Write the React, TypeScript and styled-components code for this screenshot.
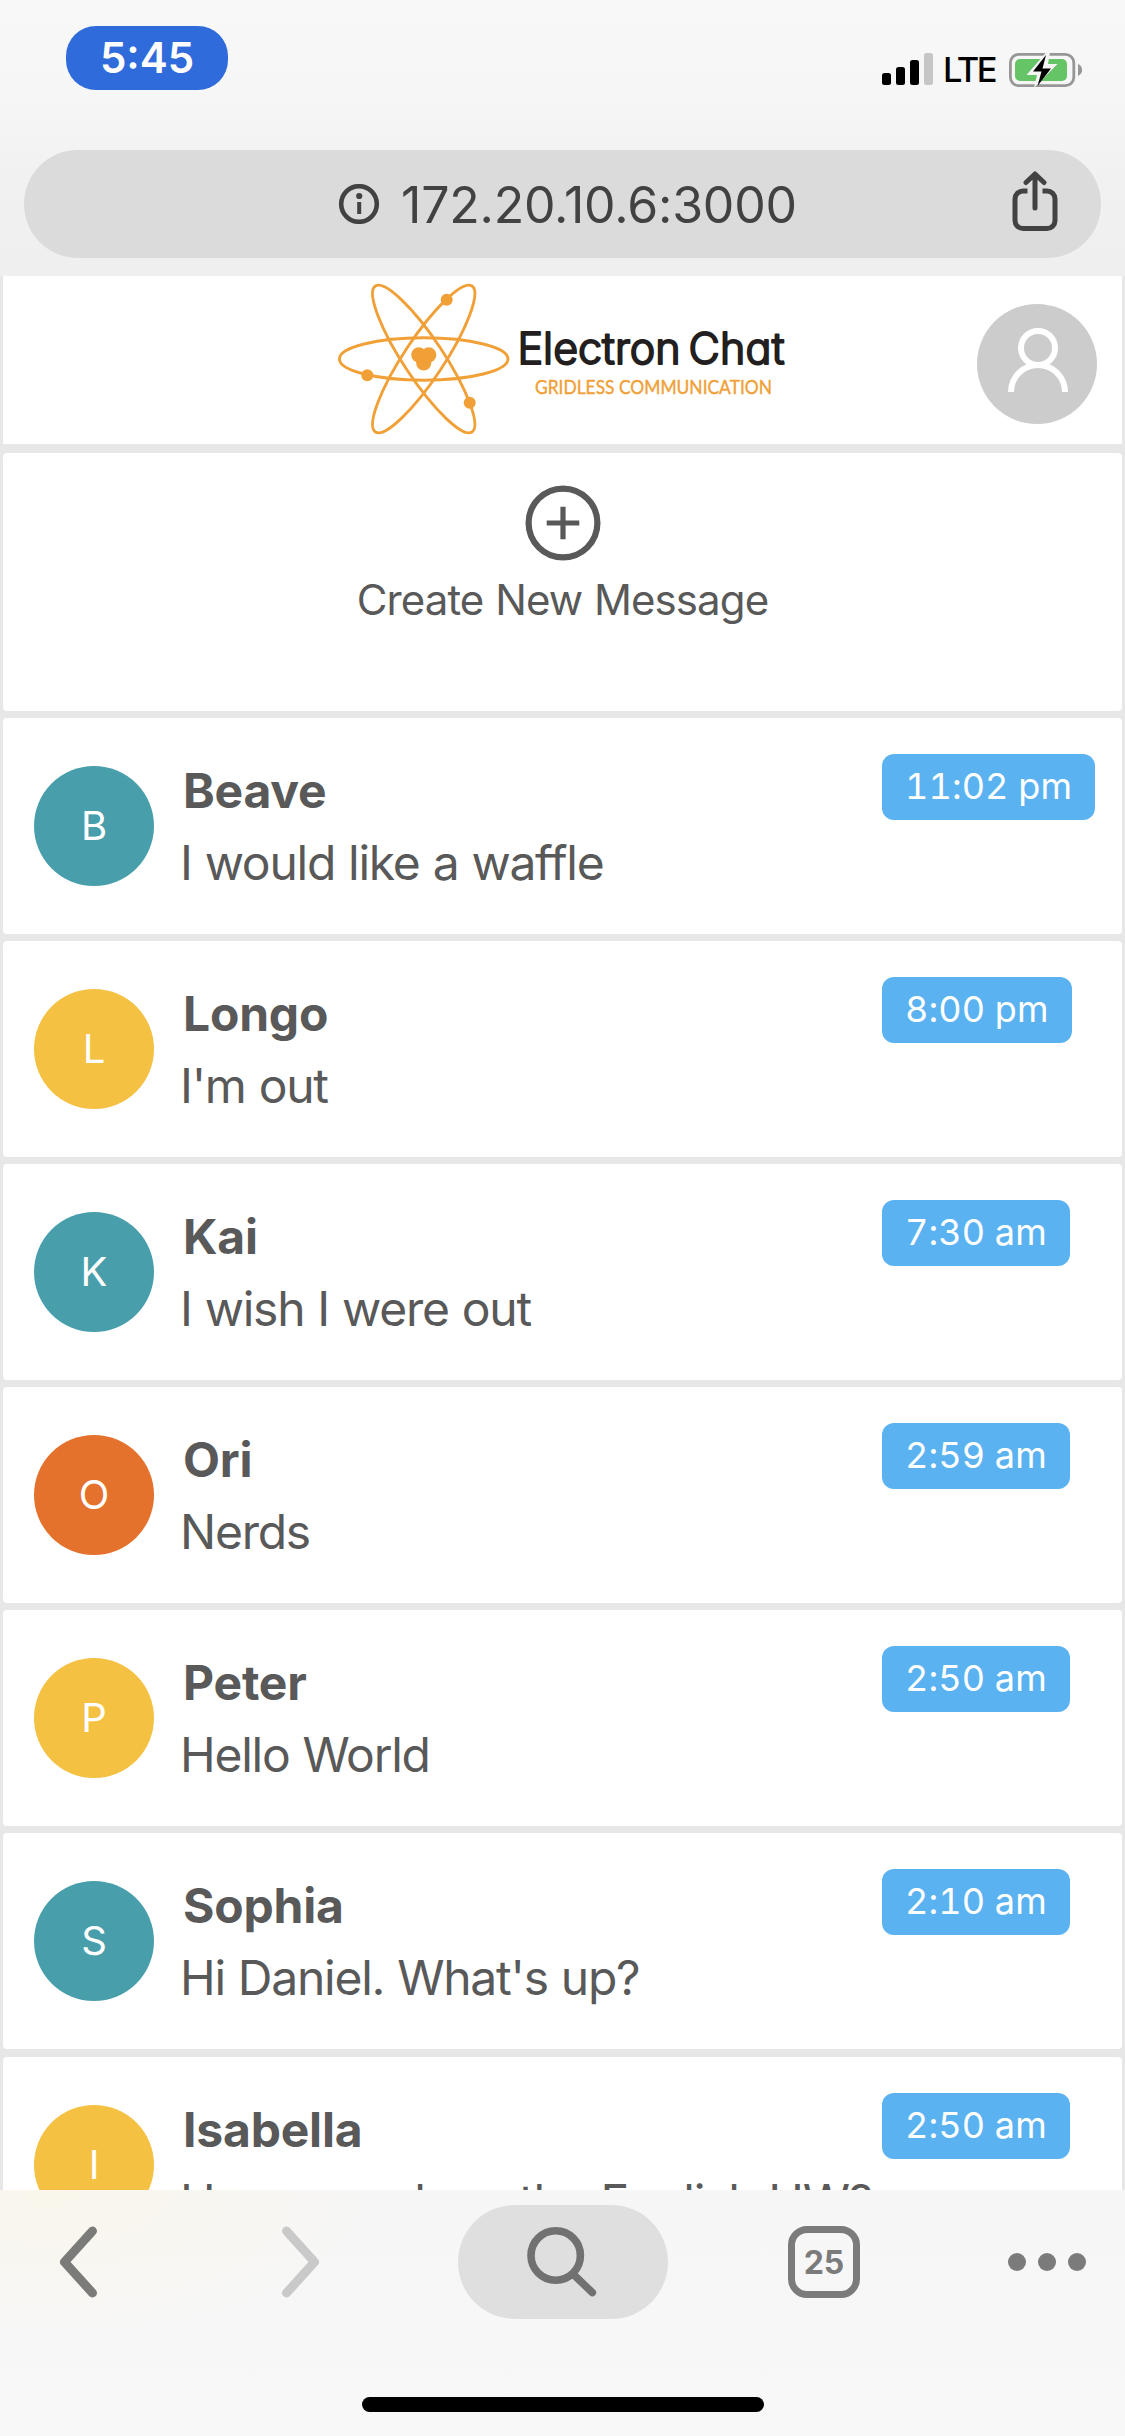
import React from "react";
import styled, { createGlobalStyle } from "styled-components";

const GlobalStyle = createGlobalStyle`
  * { box-sizing: border-box; }
  body { margin: 0; background: #e7e7e7; }
`;

const ink = "#595959";

const Screen = styled.div`
  display: flex;
  flex-direction: column;
  width: 1125px;
  height: 2436px;
  overflow: hidden;
  font-family: Inter, "Liberation Sans", sans-serif;
  color: ${ink};
`;

const TopChrome = styled.header`
  flex: none;
  height: 276px;
  padding: 26px 24px 0;
  background: linear-gradient(#f8f8f8 0%, #f6f6f6 35%, #f1f1f1 65%, #efefef 100%);
`;

const StatusBar = styled.div`
  display: flex;
  justify-content: space-between;
  height: 124px;
  padding: 0 19px 0 42px;
`;

const TimePill = styled.div`
  width: 162px;
  height: 64px;
  border-radius: 30px;
  background: #2f6bdb;
  color: #fff;
  font-size: 42px;
  font-weight: 600;
  line-height: 64px;
  text-align: center;
`;

const StatusIcons = styled.div`
  display: flex;
  align-items: flex-start;
  padding-top: 26px;
`;

const Network = styled.span`
  margin: 0 12px 0 10px;
  width: 53px;
  color: #000;
  font-size: 34.5px;
  font-weight: 500;
  line-height: 36px;
  letter-spacing: -2.5px;
`;

const AddressBar = styled.div`
  display: flex;
  align-items: center;
  height: 108px;
  padding: 0 43px 0 313px;
  border-radius: 54px;
  background: #dbdbdb;
  color: #424242;
`;

const Address = styled.span`
  flex: 1;
  margin-left: 20px;
  padding-top: 2px;
  font-size: 50px;
  line-height: 60px;
  letter-spacing: -0.2px;
`;

const Page = styled.main`
  flex: none;
  height: 1914px;
  overflow: hidden;
  padding: 0 3px;
  background: #e7e7e7;
`;

const AppHeader = styled.div`
  display: flex;
  align-items: center;
  justify-content: space-between;
  height: 168px;
  padding: 0 25px 0 332px;
  background: #fff;
`;

const LogoSvg = styled.svg`
  display: block;
  width: 456px;
  height: 160px;
`;

const BrandName = styled.text`
  fill: #231f20;
  stroke: #231f20;
  stroke-width: 2px;
  stroke-linejoin: round;
  stroke-linecap: round;
  font-family: Inter, sans-serif;
  font-size: 43px;
  font-weight: 300;
  font-feature-settings: "cv11", "ss03";
`;

const Tagline = styled.text`
  fill: #f0a037;
  stroke: #f0a037;
  stroke-width: 0.4px;
  stroke-linejoin: round;
  font-family: Lato, sans-serif;
  font-size: 19px;
`;

const ProfileButton = styled.div`
  width: 120px;
  height: 120px;
  margin-top: 8px;
  border-radius: 50%;
  background: #ccc;
`;

const Card = styled.section`
  border-radius: 4px;
  background: #fff;
`;

const CreateCard = styled(Card)`
  display: flex;
  flex-direction: column;
  align-items: center;
  height: 258px;
  margin-top: 9px;
  padding-top: 32px;
`;

const CreateLabel = styled.span`
  margin-top: 9px;
  font-size: 42px;
  line-height: 60px;
  letter-spacing: -0.9px;
  word-spacing: 0.8px;
  white-space: nowrap;
`;

const ChatRow = styled(Card)<{ $gap: number }>`
  display: grid;
  grid-template-columns: 120px minmax(0, 1fr) 240px;
  height: 216px;
  margin-top: ${(p) => p.$gap}px;
  padding-left: 31px;
`;

const Initial = styled.div<{ $color: string }>`
  width: 120px;
  height: 120px;
  margin-top: 48px;
  border-radius: 50%;
  background: ${(p) => p.$color};
  color: #fff;
  font-size: 40px;
  font-weight: 400;
  line-height: 120px;
  text-align: center;
`;

const ChatText = styled.div`
  padding: 37px 0 0 26px;
  font-size: 48px;
  line-height: 72px;
  white-space: nowrap;
`;

const Name = styled.div`
  padding-left: 3px;
  font-weight: 700;
  letter-spacing: -0.2px;
`;

const Message = styled.div`
  letter-spacing: -1.25px;
  word-spacing: 0.8px;
`;

const TimeBadge = styled.time`
  justify-self: start;
  height: 66px;
  margin-top: 36px;
  padding: 0 23px;
  border-radius: 12px;
  background: #5bb2f0;
  color: #fff;
  font-size: 36px;
  font-weight: 400;
  font-variant-numeric: tabular-nums;
  line-height: 64px;
  letter-spacing: 0.1px;
  white-space: nowrap;
`;

const BottomChrome = styled.footer`
  display: flex;
  flex: none;
  flex-direction: column;
  align-items: center;
  height: 246px;
  background:
    radial-gradient(ellipse 330px 150px at 50px 0, #faf6ec 0%, rgba(247, 247, 247, 0) 100%),
    linear-gradient(#f6f6f6, #f8f8f8);
`;

const Toolbar = styled.nav`
  display: grid;
  grid-template-columns: 60px 222px 176px 210px 120px 220px 1fr;
  align-items: center;
  width: 1125px;
  height: 114px;
  margin-top: 15px;
  color: #7b7b7b;
`;

const SearchPill = styled.div`
  display: flex;
  align-items: center;
  height: 114px;
  padding-left: 68px;
  border-radius: 57px;
  background: #dfdfdf;
`;

const TabCount = styled.div`
  display: flex;
  align-items: center;
  justify-content: center;
  width: 72px;
  height: 72px;
  border: 7.5px solid #7b7b7b;
  border-radius: 19px;
  font-size: 32px;
  font-weight: 700;
`;

const HomeIndicator = styled.div`
  width: 402px;
  height: 15px;
  margin-top: 78px;
  border-radius: 8px;
  background: #000;
`;

const SignalIcon = () => (
  <svg width="51" height="34" viewBox="882 52 51 34">
    <rect x="882" y="73" width="9" height="12" rx="2.5" />
    <rect x="896" y="67" width="9" height="18" rx="2.5" />
    <rect x="910" y="60" width="9" height="25" rx="2.5" />
    <rect x="924" y="53" width="9" height="32" rx="2.5" fill="#c6c6c6" />
  </svg>
);

const BatteryIcon = () => (
  <svg width="74" height="36" viewBox="1008 51 74 36">
    <rect x="1010.4" y="53.3" width="63.4" height="31.4" rx="8.5" fill="none" stroke="#979797" strokeWidth="2.8" />
    <path d="M1078 63c2.7 1.2 4.2 3.4 4.2 6s-1.5 4.8-4.2 6z" fill="#979797" />
    <rect x="1015" y="58" width="52" height="22" rx="5" fill="#64c466" />
    <path d="M1046.500 51 1026.500 74h10.500L1034 87 1057.500 63h-9.500L1050 51z" fill="#f5f5f5" />
    <path d="M1046 54 1033 70.500h8.500L1037.500 85 1051 67.500h-8.500z" fill="#000" />
  </svg>
);

const InfoIcon = () => (
  <svg width="44" height="40" viewBox="-2 0 44 40">
    <circle cx="20" cy="20" r="17.8" fill="none" stroke="currentColor" strokeWidth="4.600" />
    <circle cx="20.2" cy="12" r="3.1" fill="currentColor" />
    <path d="M20.200 18v12" stroke="currentColor" strokeWidth="4" />
  </svg>
);

const ShareGlyph = styled.svg`
  margin-bottom: 7px;
`;

const ShareIcon = () => (
  <ShareGlyph width="46" height="60" viewBox="1012.5 170.5 46 60" fill="none" stroke="currentColor" strokeWidth="5">
    <path d="M1028 190.500h-4.500a8 8 0 0 0-8 8v21.500a8 8 0 0 0 8 8h24a8 8 0 0 0 8-8v-21.500a8 8 0 0 0-8-8H1043" />
    <path d="M1035.500 207.500V174M1026.500 182l9-8.500 9 8.500" strokeLinecap="round" strokeLinejoin="round" />
  </ShareGlyph>
);

const Logo = () => (
  <LogoSvg viewBox="335 280 456 160">
    <g fill="none" stroke="#f0a037" strokeWidth="2.9">
      <ellipse cx="423.7" cy="359" rx="84.3" ry="21.2" />
      <ellipse cx="423.7" cy="359" rx="87.5" ry="20" transform="rotate(56.5 423.7 359)" />
      <ellipse cx="423.7" cy="359" rx="87.5" ry="20" transform="rotate(-56.5 423.7 359)" />
    </g>
    <g fill="#f0a037">
      <circle cx="446.7" cy="299.7" r="6" />
      <circle cx="367.3" cy="375.3" r="6" />
      <circle cx="469.7" cy="402.7" r="6" />
      <circle cx="418.8" cy="354.8" r="7.6" />
      <circle cx="428.7" cy="354.8" r="7.6" />
      <circle cx="423.7" cy="363" r="7.6" />
    </g>
    <BrandName x="517.5" y="363.5" textLength="163" lengthAdjust="spacing">Electron</BrandName>
    <BrandName x="688.5" y="363.5" textLength="96" lengthAdjust="spacing">Chat</BrandName>
    <Tagline x="535" y="394" textLength="237" lengthAdjust="spacingAndGlyphs">GRIDLESS COMMUNICATION</Tagline>
  </LogoSvg>
);

const PersonIcon = () => (
  <svg width="120" height="120" viewBox="977 304 120 120" fill="none" stroke="#fff" strokeWidth="6">
    <circle cx="1038" cy="348" r="17" />
    <path d="M1011 392a27 27 0 0 1 54 0" />
  </svg>
);

const PlusCircleIcon = () => (
  <svg width="76" height="76" viewBox="-38 -38 76 76" fill="none" stroke={ink}>
    <circle r="34.4" strokeWidth="6.2" />
    <path d="M-16.300 0h32.600M0-16.300v32.600" strokeWidth="5.2" />
  </svg>
);

const Chevron = ({ forward = false }: { forward?: boolean }) => (
  <svg width="38" height="72" viewBox="0 0 38 72" fill="none" stroke={forward ? "#c9c9c9" : "#7b7b79"} strokeWidth="9" strokeLinecap="round" strokeLinejoin="round">
    <path d={forward ? "M4.500 5 32.500 36 4.500 67" : "M32.500 5 4.500 36 32.500 67"} />
  </svg>
);

const SearchIcon = () => (
  <svg width="72" height="72" viewBox="526 2225 72 72" fill="none" stroke="#717171" strokeWidth="7.6">
    <circle cx="555.7" cy="2254.5" r="24.7" />
    <path d="M573 2273 592.300 2291.500" strokeLinecap="round" />
  </svg>
);

const DotsIcon = () => (
  <svg width="80" height="20" viewBox="1008 2252 80 20" fill="#7b7b7b">
    <circle cx="1017" cy="2262" r="9" />
    <circle cx="1047" cy="2262" r="9" />
    <circle cx="1077" cy="2262" r="9" />
  </svg>
);

const teal = "#489fab";
const yellow = "#f4c142";
const orange = "#e4712c";

const chats = [
  { name: "Beave", message: "I would like a waffle", time: "11:02 pm", color: teal },
  { name: "Longo", message: "I'm out", time: "8:00 pm", color: yellow },
  { name: "Kai", message: "I wish I were out", time: "7:30 am", color: teal },
  { name: "Ori", message: "Nerds", time: "2:59 am", color: orange },
  { name: "Peter", message: "Hello World", time: "2:50 am", color: yellow },
  { name: "Sophia", message: "Hi Daniel. What's up?", time: "2:10 am", color: teal },
  { name: "Isabella", message: "Have you done the English HW?", time: "2:50 am", color: yellow, gap: 8 },
];

export default function App() {
  return (
    <Screen>
      <GlobalStyle />
      <TopChrome>
        <StatusBar>
          <TimePill>5:45</TimePill>
          <StatusIcons>
            <SignalIcon />
            <Network>LTE</Network>
            <BatteryIcon />
          </StatusIcons>
        </StatusBar>
        <AddressBar>
          <InfoIcon />
          <Address>172.20.10.6:3000</Address>
          <ShareIcon />
        </AddressBar>
      </TopChrome>
      <Page>
        <AppHeader>
          <Logo />
          <ProfileButton>
            <PersonIcon />
          </ProfileButton>
        </AppHeader>
        <CreateCard>
          <PlusCircleIcon />
          <CreateLabel>Create New Message</CreateLabel>
        </CreateCard>
        {chats.map((chat) => (
          <ChatRow key={chat.name} $gap={chat.gap ?? 7}>
            <Initial $color={chat.color}>{chat.name[0]}</Initial>
            <ChatText>
              <Name>{chat.name}</Name>
              <Message>{chat.message}</Message>
            </ChatText>
            <TimeBadge>{chat.time}</TimeBadge>
          </ChatRow>
        ))}
      </Page>
      <BottomChrome>
        <Toolbar>
          <span />
          <Chevron />
          <Chevron forward />
          <SearchPill>
            <SearchIcon />
          </SearchPill>
          <span />
          <TabCount>25</TabCount>
          <DotsIcon />
        </Toolbar>
        <HomeIndicator />
      </BottomChrome>
    </Screen>
  );
}
